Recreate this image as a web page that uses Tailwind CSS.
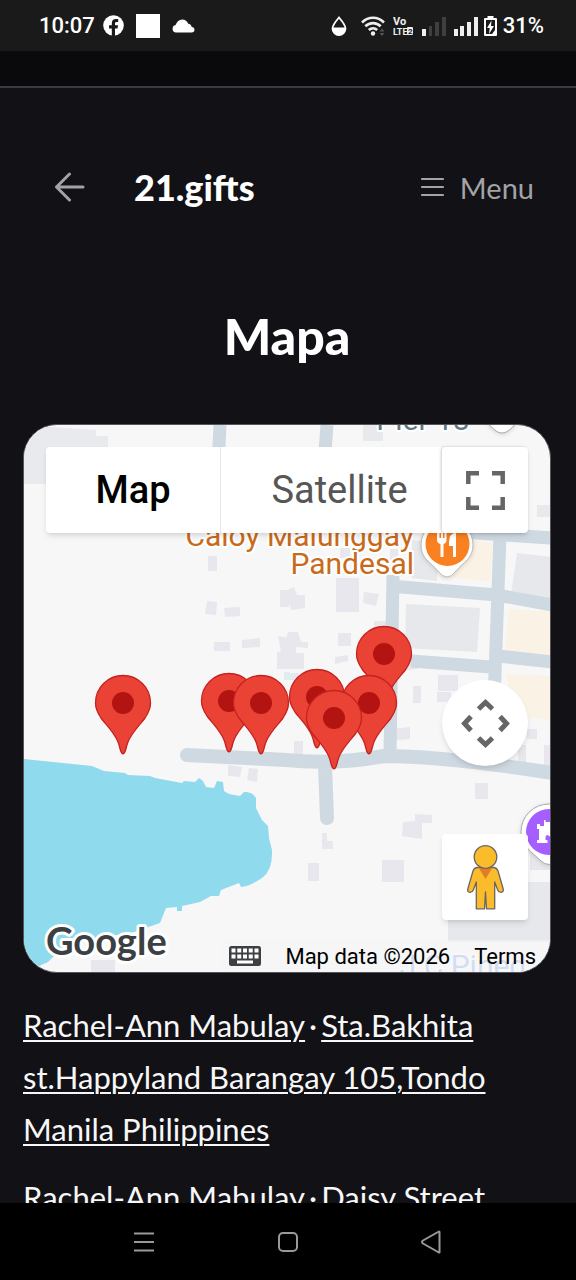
<!DOCTYPE html>
<html lang="en">
<head>
  <meta charset="UTF-8" />
  <meta name="viewport" content="width=device-width, initial-scale=1.0" />
  <title>Mapa - 21.gifts</title>
  <script src="https://cdn.jsdelivr.net/npm/@tailwindcss/browser@4"></script>
</head>
<body class="flex h-screen flex-col overflow-hidden bg-[#121116] font-['Lato',sans-serif] text-white">

  <!-- Status bar -->
  <div class="flex h-[51px] shrink-0 items-center justify-between bg-[#1a1a1a] pr-8 pl-[39px] font-['Roboto',sans-serif] text-[22px] font-medium">
    <div class="flex items-center">
      <span>10:07</span>
      <svg class="ml-2 size-[21px]" viewBox="0 0 21 21"><circle cx="10.5" cy="10.5" r="10.3" fill="#fff"/><path d="M8.8 21v-7.6H6v-3.2h2.8V8.4c0-2.9 1.5-4.3 4.2-4.3.9 0 1.7.1 2.2.2v2.6h-1.5c-1.3 0-1.7.6-1.7 1.7v1.6h3.1l-.6 3.2H12V21z" fill="#1a1a1a"/></svg>
      <span class="ml-3 size-6 bg-white"></span>
      <svg class="ml-3 h-[14px] w-[23px]" viewBox="0 0 23 14"><path d="M4 13.5a3.8 3.8 0 0 1-.4-7.5C5 2.6 7 .5 10.2.5c3 0 5 1.700 6 4.200 1.900.1 3.200 1.400 3.500 3.200 1.600.2 2.800 1.200 2.800 2.800 0 1.700-1.200 2.800-2.800 2.800z" fill="#fff"/></svg>
    </div>
    <div class="flex items-center">
      <svg class="h-5 w-4" viewBox="0 0 16 20"><path d="M8 1.500C5 5 1.500 9 1.500 12.500a6.500 6.500 0 0 0 13 0C14.500 9 11 5 8 1.500z" fill="none" stroke="#fff" stroke-width="1.800"/><path d="M1.500 11.500h13c.6 4-2.500 7.500-6.500 7.500s-7.100-3.500-6.500-7.500z" fill="#fff"/></svg>
      <svg class="ml-[14px] h-5 w-6" viewBox="0 0 24 20"><g fill="none" stroke="#eee" stroke-width="2.600"><path d="M1 6.500c6.500-6.300 15.500-6.300 22 0"/><path d="M4.300 10.300c4.500-4.300 10.900-4.300 15.400 0"/><path d="M7.800 14c2.500-2.300 5.900-2.300 8.400 0"/></g><circle cx="12" cy="17.500" r="2.200" fill="#eee"/><path d="M18.500 15.500 21 12.500l2.500 3zm0 1.500 2.500 3 2.500-3z" fill="#555"/></svg>
      <svg class="ml-2 h-5 w-5" viewBox="0 0 20 20" font-family="Roboto, sans-serif" font-weight="700" fill="#eee"><text x="0" y="9" font-size="11">Vo</text><text x="0" y="19" font-size="9">LTE</text><rect x="14" y="11" width="6" height="8" rx="1"/><text x="15" y="18" font-size="8" fill="#1a1a1a">2</text></svg>
      <svg class="ml-2 h-5 w-[25px]" viewBox="0 0 25 20"><path d="M1 13h4v7H1z" fill="#eee"/><path d="M8 10h3v10H8zM14 6h4v14h-4zM21 1h4v19h-4z" fill="#3f3f3f"/></svg>
      <svg class="ml-[7px] h-5 w-[25px]" viewBox="0 0 25 20"><path d="M1 13h4v7H1zM7 10h4v10H7zM14 6h4v14h-4zM21 1h4v19h-4z" fill="#eee"/></svg>
      <svg class="ml-[6px] h-5 w-[13px]" viewBox="0 0 13 20"><path d="M3.500 0h6v2H12q1 0 1 1v16q0 1-1 1H1q-1 0-1-1V3q0-1 1-1h2.500z" fill="#fff"/><path d="M2 4h9v10l-3 4H2z" fill="#1a1a1a"/><path d="M7.500 4.500 3 12h2.700L5 18l5-8H7z" fill="#fff"/></svg>
      <span class="ml-[6px]">31%</span>
    </div>
  </div>
  <div class="h-[37px] shrink-0 border-b-2 border-[#3c3b41] bg-[#0a0a0c]"></div>

  <!-- Page -->
  <div class="min-h-0 flex-1 overflow-hidden">
    <header class="flex h-[198px] items-center pr-[42px] pl-[54px]">
      <a href="#" aria-label="Back"><svg class="h-[30px] w-8" viewBox="0 0 32 30" fill="none" stroke="#a3a3a5" stroke-width="3" stroke-linecap="round" stroke-linejoin="round"><path d="M29 15H3M15.500 2 2.500 15l13 13"/></svg></a>
      <a href="#" class="ml-12 text-[36px] leading-none font-black">21.gifts</a>
      <button type="button" class="ml-auto flex items-center gap-4 text-[29px] leading-none text-[#a3a3a5]">
        <svg class="h-5 w-6" viewBox="0 0 24 20" stroke="#a3a3a5" stroke-width="2.200" stroke-linecap="round"><path d="M2 2h21M2 10h21M2 18h21"/></svg>
        Menu
      </button>
    </header>

    <main class="pr-[25px] pl-[23px]">
      <h1 class="mt-[14px] text-center text-[50px] leading-[72px] font-black">Mapa</h1>

      <section aria-label="Map" class="relative mt-[52px] aspect-[528/549] overflow-hidden rounded-[34px] border border-[#55545a] bg-[#f7f7f7] font-['Roboto',sans-serif]">
        <svg class="absolute inset-0 h-full w-full" viewBox="24 425 526 547" preserveAspectRatio="xMidYMid slice">
          <defs>
            <g id="pin">
              <path d="M0 0C-3-1-2.500-6-5-12C-9-22-17-29-22-36C-26-42-27.500-46-27.500-51A27.500 27.500 0 0 1 27.500-51C27.500-46 26-42 22-36C17-29 9-22 5-12C2.500-6 3-1 0 0Z" fill="#ea4335" stroke="#c5221f" stroke-width="1.300"/>
              <circle cy="-51" r="11" fill="#b31412"/>
            </g>
          </defs>
          <!-- blocks -->
          <path d="M24 425 96 430V436H108V460H46V484L24 484z" fill="#e8eaed"/>
          <path d="M363 425h20v16h-20zM537 505h15v12h-15z" fill="#e8e9ed"/>
          <path d="M412 540l27 3-2 38-25-3zM517 553l35 4v42l-41-5zM406 604l74 4-3 44-72-4zM512 882h40v60H448V882zM530 838h22v32h-22z" fill="#e6e8ec"/>
          <path d="M466 540l27 3-3 38-52-4zM509 609l43 3v44l-47-4zM506 674l46 2v44l-38-4z" fill="#f9f2e5"/>
          <!-- buildings -->
          <path d="M208 556h9v15h-9zM207 601l10 1-1 13-11-1zM224 608l16-1v9l-15 1zM214 642h16v9h-16zM242 640l18-2v9l-18 1zM278 636l16 3-1 14h11v16h-27v-17h4zM280 590h9v17h-9zM286 591l8-4 3 8h8v13l-14 2zM336 578h23v34h-23zM364 592l15 2-3 12-13-3zM288 632h10l3 10h7v6l-12-1v13h-12v-15zM338 633h13v13h-13zM335 657l13-2v6l-13 3zM374 621h12v8h-12zM340 548h10v10h-10zM390 549h8v13h-8zM288 673h11v7h-11zM284 672h6v8h-6zM438 675h20v16h-20zM437 692h14v10h-14zM413 686h8v17h-8zM408 658l14 2-5 9-10 1zM391 729l19-2v12l-22 2zM294 741h9v14h-9zM228 765l14 2-2 10-12-1zM249 768l9 1-1 13-10-2zM475 783h13v16h-13zM415 814l17 1v8h-10v16l-20-3 1-14 12-1zM382 860h22v22h-22zM308 863h11v18h-11zM322 833h5v8h6v8h-11zM91 960h24v13H91zM527 729h10v10h-10zM518 745h8v20h-8zM544 745h8v25h-8z" fill="#e7e7ed"/>
          <path d="M284 673h8v7h-8z" fill="#dcefee"/>
          <!-- roads -->
          <g fill="none" stroke="#cfd9e2" stroke-width="13" stroke-linejoin="round">
            <path d="M220 425l-2 40M327 425l-3 40M430 530l122 8M500 535l-7 195M393 575l-3 178M390 586l107 9 55 10M411 661l80 6M498 656l54 6" />
            <path d="M187 755l99 5q48 5 98-4 60 0 168 17M325 765l2 53" stroke-width="14" stroke-linecap="round"/>
          </g>
          <!-- bay -->
          <path d="M24 759 92 766 104 771 125 773 128 775 150 776 155 778 182 783 184 781 195 782 199 778 203 781 206 787 214 788 217 781 223 782 224 791 229 794 240 796 244 792Q252 791 256 798V808L262 820 268 826 269 838 272 850Q273 870 262 878 250 886 241 887L239 883 221 890 219 896 211 896 200 902 182 906V911H177V907L166 908 160 923 134 932 90 940 60 950 48 962 24 973z" fill="#90daee"/>
          <!-- places -->
          <g font-family="Roboto, sans-serif" paint-order="stroke" stroke="#fff" stroke-width="4" stroke-linejoin="round">
            <text x="423" y="430" font-size="30" text-anchor="middle" fill="#5f7785">Pier 18</text>
            <text x="414" y="546" font-size="30" text-anchor="end" fill="#c96a1a">Caloy Malunggay</text>
            <text x="414" y="574" font-size="30" text-anchor="end" fill="#c96a1a">Pandesal</text>
            <text x="463" y="976" font-size="30" text-anchor="middle" fill="#7fa5ef">J C Pined</text>
          </g>
          <g class="drop-shadow-sm">
            <path d="M487 421q4 7 9 10 6 4 12 0 5-3 9-10z" fill="#fff" stroke="#aaa" stroke-width="1"/>
            <path d="M447 519a26 26 0 0 1 26 26c0 14-10 17-17 26q-9 12-18 0c-7-9-17-12-17-26a26 26 0 0 1 26-26z" fill="#fff" stroke="#bbb" stroke-width="1"/>
            <path d="M549 804a28 28 0 0 1 28 28c0 14-11 20-19 28q-9 9-18 0c-8-8-19-14-19-28a28 28 0 0 1 28-28z" fill="#fff" stroke="#aaa" stroke-width="1"/>
          </g>
          <circle cx="447.500" cy="544" r="22" fill="#f98122"/>
          <path d="M437 531h2.500v7h1.500v-7h2v7h1.500v-7h2v9q0 3-3 4v13h-3v-13q-3.500-1-3.500-4zM449 542q0-8 7-10v25h-3v-11h-4z" fill="#fff"/>
          <circle cx="549" cy="832" r="23" fill="#a55eff"/>
          <path d="M537 824h3v2h4v-6h1.500v2h5v4h4v17h-4v-6q-4-4-5 0v3h2v3H537v-3h2v-11h-2z" fill="#fff"/>
          <!-- markers -->
          <use href="#pin" x="123" y="754"/>
          <use href="#pin" x="229" y="752"/>
          <use href="#pin" x="261" y="754"/>
          <use href="#pin" x="384" y="705"/>
          <use href="#pin" x="317" y="748"/>
          <use href="#pin" x="369" y="754"/>
          <use href="#pin" x="334" y="769"/>
        </svg>

        <!-- Map controls -->
        <div class="relative flex h-full flex-col">
          <div class="mx-[22px] mt-[22px] grid h-[86px] grid-cols-[175fr_221fr_86px] rounded-[4px] bg-white text-[38px] shadow-md">
            <button type="button" class="border-r border-[#e6e6e6] font-medium text-black">Map</button>
            <button type="button" class="pl-4 text-[#565656]">Satellite</button>
            <button type="button" aria-label="Toggle fullscreen view" class="flex items-center justify-center rounded-[4px] shadow-[-1px_0_3px_rgba(0,0,0,0.2)]">
              <svg class="size-[39px]" viewBox="0 0 39 39" fill="none" stroke="#666" stroke-width="4.500"><path d="M2.300 13V2.300H13M26 2.300h10.700V13M36.700 26v10.700H26M13 36.700H2.300V26"/></svg>
            </button>
          </div>
          <div class="mt-[147px] mr-[22px] flex flex-col items-end gap-[68px]">
            <button type="button" aria-label="Map camera controls" class="flex size-[86px] items-center justify-center rounded-full bg-white shadow-md">
              <svg class="size-[49px]" viewBox="0 0 49 49" fill="none" stroke="#666" stroke-width="5"><path d="m17.500 10 7-6.500 7 6.500M17.500 39l7 6.500 7-6.500M10 17.500l-6.500 7 6.500 7M39 17.500l6.500 7-6.500 7"/></svg>
            </button>
            <button type="button" aria-label="Street View Pegman" class="flex size-[86px] items-center justify-center rounded-[4px] bg-white shadow-md">
              <svg class="h-[65px] w-[37px]" viewBox="0 0 37 65" stroke="#6b6561" stroke-width="1.300" stroke-linejoin="round"><path d="M10 22.500Q7 23 6 26L.8 44q-.5 3 2 3.300 2.500.2 3.500-2.300l3-8v26.800h8.200L18.500 47l1 16.800h8.200V37l3 8q1 2.500 3.500 2.300 2.500-.3 2-3.300L31 26q-1-3-4-3.500z" fill="#fbbc2b"/><path d="M11.500 22.500h14L18.500 34z" fill="#e37c27" stroke="none"/><circle cx="18.500" cy="12" r="11.300" fill="#fbbc2b"/></svg>
            </button>
          </div>
          <div class="mt-auto flex items-end justify-between pl-5">
            <a href="#" aria-label="Google"><svg class="h-12 w-[126px]" viewBox="0 0 126 48"><text x="2" y="31" font-family="Lato, sans-serif" font-size="38" font-weight="700" fill="#3c4043" stroke="#fff" stroke-width="6" stroke-linejoin="round" paint-order="stroke">Google</text></svg></a>
            <div class="flex h-[32px] items-center bg-[#f5f5f5]/70 pr-[14px] pl-2 text-[22px] whitespace-nowrap text-black">
              <button type="button" aria-label="Keyboard shortcuts"><svg class="mr-6 h-5 w-8" viewBox="0 0 32 20"><rect width="32" height="20" rx="2.500" fill="#3c4043"/><path d="M2.500 4.500h27M2.500 10.500h27" stroke="#fff" stroke-width="4" stroke-dasharray="4 1.750"/><path d="M8 16h16" stroke="#fff" stroke-width="3"/></svg></button>
              <span>Map data ©2026</span>
              <a href="#" class="ml-6">Terms</a>
            </div>
          </div>
        </div>
      </section>

      <ul class="mt-[26px] space-y-4 text-[31px] leading-[52px] text-[#f7f7f8]">
        <li><a href="#" class="underline decoration-2 underline-offset-3">Rachel-Ann Mabulay</a><span class="px-1">·</span><a href="#" class="underline decoration-2 underline-offset-3">Sta.Bakhita st.Happyland Barangay 105,Tondo Manila Philippines</a></li>
        <li><a href="#" class="underline decoration-2 underline-offset-3">Rachel-Ann Mabulay</a><span class="px-1">·</span><a href="#" class="underline decoration-2 underline-offset-3">Daisy Street</a></li>
      </ul>
    </main>
  </div>

  <!-- System navigation -->
  <nav class="grid h-[77px] shrink-0 grid-cols-[1fr_144px_1fr] items-center bg-black">
    <button type="button" aria-label="Recent apps" class="justify-self-end pr-[62px]"><svg class="h-5 w-5" viewBox="0 0 20 20" stroke="#999" stroke-width="2"><path d="M0 1.500h20M0 10h20M0 18.500h20"/></svg></button>
    <button type="button" aria-label="Home" class="justify-self-center"><svg class="size-5" viewBox="0 0 20 20"><rect x="1" y="1" width="18" height="18" rx="4" fill="none" stroke="#999" stroke-width="2"/></svg></button>
    <button type="button" aria-label="Back" class="justify-self-start pl-[60px]"><svg class="h-6 w-[22px]" viewBox="0 0 22 24"><path d="M19.500 2v20Q20 23 18 22L3 13.500Q1 12 3 10.500L18 2q1.500-1 1.500 0z" fill="none" stroke="#999" stroke-width="2" stroke-linejoin="round"/></svg></button>
  </nav>
</body>
</html>
